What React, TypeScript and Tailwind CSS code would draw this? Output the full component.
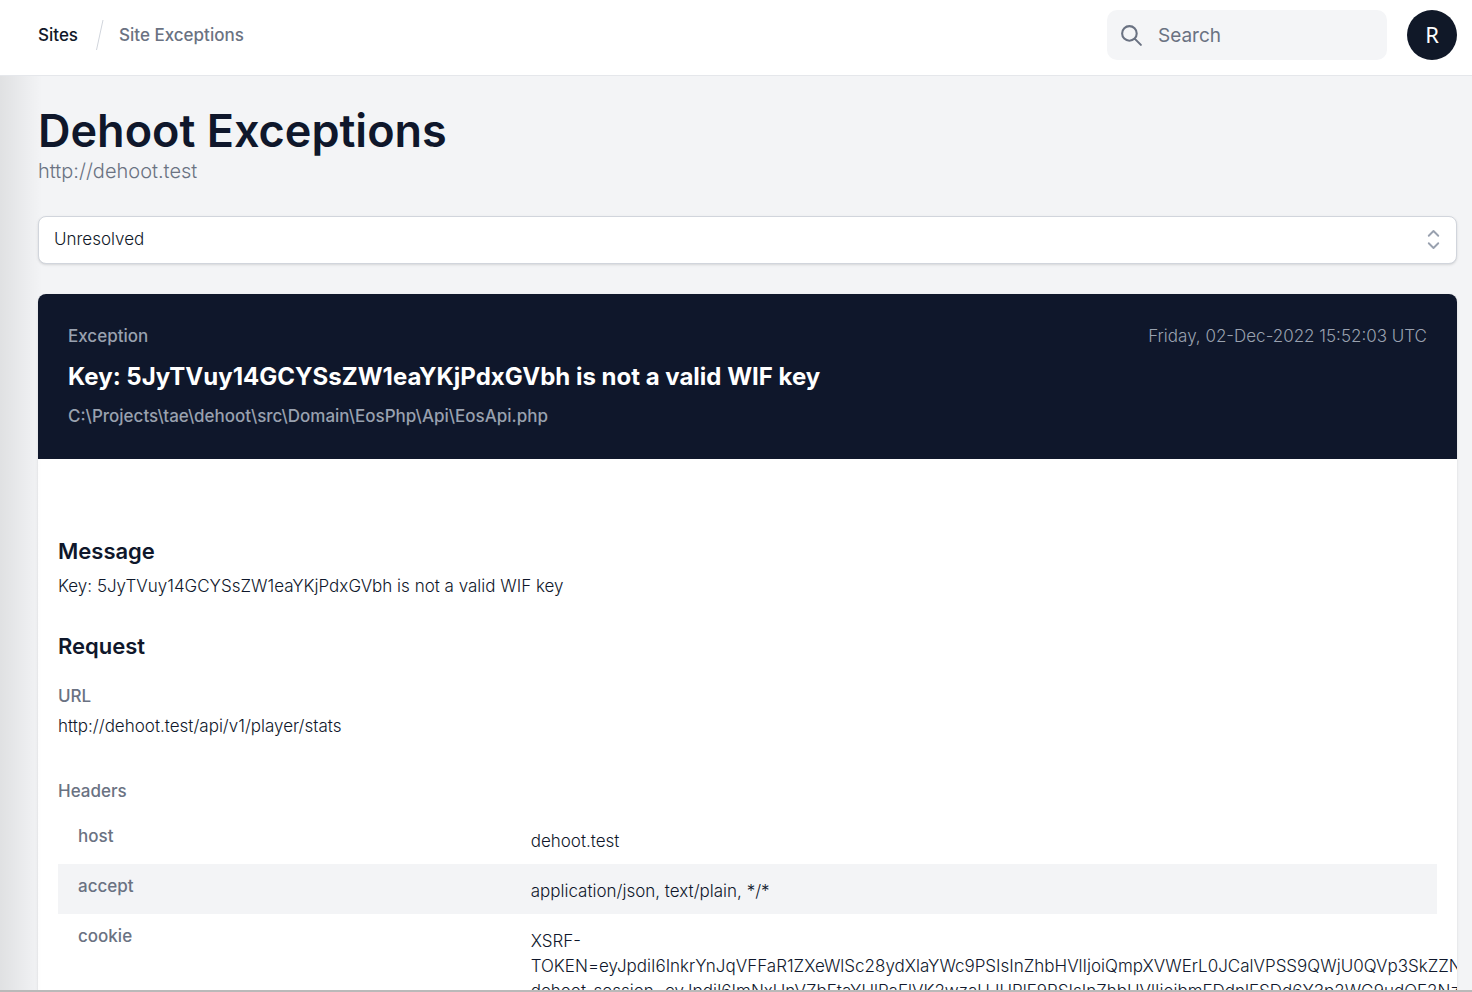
import React from "react";

const headers = [
  { name: "host", value: "dehoot.test" },
  { name: "accept", value: "application/json, text/plain, */*" },
  {
    name: "cookie",
    value:
      "XSRF-TOKEN=eyJpdiI6InkrYnJqVFFaR1ZXeWlSc28ydXlaYWc9PSIsInZhbHVlIjoiQmpXVWErL0JCalVPSS9QWjU0QVp3SkZZNS dehoot_session=eyJpdiI6ImNxUnVZbEtaYUlPaElVK2wzaUJURlE9PSIsInZhbHVlIjoibmFDdnlFSDd6Y3p2WG9udOF2NzV",
  },
];

function TopBar() {
  return (
    <header className="flex shrink-0 items-center justify-between border-b border-gray-200 bg-white pt-2.5 pr-[15px] pb-[15px] pl-[38px]">
      <nav aria-label="Breadcrumb" className="flex items-center text-[17px] font-medium">
        <a href="#sites" className="text-gray-900">Sites</a>
        <svg viewBox="0 0 25 30" className="mx-2 h-[30px] w-[25px] text-gray-300" fill="none" stroke="currentColor" aria-hidden="true">
          <path d="M10.5 30 17 0" />
        </svg>
        <a href="#exceptions" className="text-gray-500">Site Exceptions</a>
      </nav>
      <div className="flex items-center gap-5">
        <label className="flex h-[50px] w-[280px] items-center gap-[14px] rounded-[10px] bg-[#f4f5f7] px-3 text-gray-500">
          <svg viewBox="0 0 24 24" className="size-[25px] shrink-0" fill="none" stroke="currentColor" strokeWidth="2" strokeLinecap="round" aria-hidden="true">
            <path d="m21 21-6-6m2-5a7 7 0 1 1-14 0 7 7 0 0 1 14 0z" />
          </svg>
          <input type="search" aria-label="Search" placeholder="Search" className="w-full min-w-0 bg-transparent text-[19px] outline-none placeholder:text-gray-500" />
        </label>
        <button className="size-[50px] rounded-full bg-gray-900 pb-0.5 font-['Noto_Sans'] text-[22px] text-white">R</button>
      </div>
    </header>
  );
}

export default function App() {
  return (
    <div className="flex h-screen flex-col overflow-hidden border-b-2 border-[#b9b9b9] bg-gray-100 font-['Inter',sans-serif] text-[17px] leading-[25px] text-slate-900">
      <TopBar />
      <main className="relative min-h-0 flex-1 overflow-hidden pt-[30px] pr-[15px] pl-[38px]">
        <div className="pointer-events-none absolute inset-y-0 left-0 w-[42px] bg-linear-to-r from-black/8 to-transparent" />
        <h1 className="text-[45px] leading-[50px] font-semibold text-slate-900">Dehoot Exceptions</h1>
        <p className="text-[20px] leading-[30px] font-light text-gray-500">http://dehoot.test</p>

        <div className="relative mt-[30px]">
          <select aria-label="Status" className="h-12 w-full appearance-none rounded-[8px] border border-gray-300 bg-white px-[15px] pb-0.5 font-light text-gray-900 shadow-sm">
            <option>Unresolved</option>
            <option>Resolved</option>
          </select>
          <svg viewBox="0 0 20 20" className="pointer-events-none absolute top-[11px] right-[11px] size-[25px] text-gray-400" fill="none" stroke="currentColor" strokeWidth="1.5" strokeLinecap="round" strokeLinejoin="round" aria-hidden="true">
            <path d="m6.2 7 3.8-3.8L13.8 7M6.2 13l3.8 3.8 3.8-3.8" />
          </svg>
        </div>

        <article className="mt-[30px] overflow-hidden rounded-[8px] bg-white shadow">
          <div className="flex items-start justify-between bg-slate-900 p-[30px] text-gray-400">
            <div className="flex flex-col gap-2.5 font-medium">
              <p>Exception</p>
              <h2 className="text-[24px] leading-[35px] font-bold text-white">Key: 5JyTVuy14GCYSsZW1eaYKjPdxGVbh is not a valid WIF key</h2>
              <p>C:\Projects\tae\dehoot\src\Domain\EosPhp\Api\EosApi.php</p>
            </div>
            <time className="font-light">Friday, 02-Dec-2022 15:52:03 UTC</time>
          </div>

          <div className="px-5 pt-[75px] pb-5 font-light">
            <section>
              <h3 className="text-[22px] leading-[35px] font-semibold">Message</h3>
              <p className="mt-[5px]">Key: 5JyTVuy14GCYSsZW1eaYKjPdxGVbh is not a valid WIF key</p>
            </section>

            <section className="mt-[30px]">
              <h3 className="text-[22px] leading-[35px] font-semibold">Request</h3>
              <h4 className="mt-5 font-medium text-gray-500">URL</h4>
              <p className="mt-[5px]">http://dehoot.test/api/v1/player/stats</p>
              <h4 className="mt-10 font-medium text-gray-500">Headers</h4>
              <table className="mt-2.5 w-full table-fixed text-left">
                <tbody>
                  {headers.map((header) => (
                    <tr key={header.name} className="align-top even:bg-gray-100">
                      <th scope="row" className="w-1/3 px-5 py-2.5 font-medium text-gray-500">{header.name}</th>
                      <td className="pt-[15px] pb-2.5 pl-[13px]">{header.value}</td>
                    </tr>
                  ))}
                </tbody>
              </table>
            </section>
          </div>
        </article>
      </main>
    </div>
  );
}
